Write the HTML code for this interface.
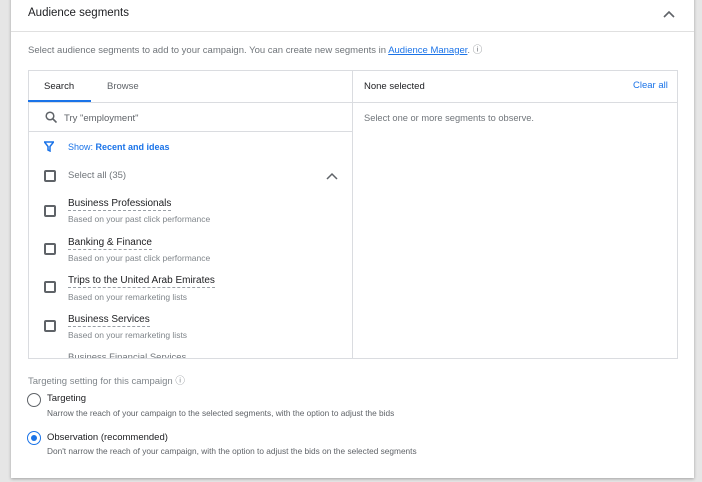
<!DOCTYPE html>
<html><head><style>
*{box-sizing:border-box;margin:0;padding:0}
body{width:702px;height:482px;background:#e6e6e6;font-family:"Liberation Sans",Arial,sans-serif;position:relative;overflow:hidden;color:#3c4043}
.card{position:absolute;left:11px;top:-4px;width:683px;height:482px;background:#fff;box-shadow:0 1px 3px rgba(0,0,0,.3)}
.a{position:absolute;white-space:nowrap}
.cb{position:absolute;width:12px;height:12px;border:2px solid #5f6368;border-radius:2px}
.t{font-size:10px;color:#202124;border-bottom:1px dashed #9aa0a6;line-height:12px}
.s{font-size:8.5px;color:#80868b}
</style></head><body>
<div class="card"></div>
<div class="a" style="left:28px;top:7px;font-size:11.5px;color:#202124">Audience segments</div>
<svg class="a" style="left:663px;top:10px" width="12" height="8"><path d="M1 7L6 2L11 7" stroke="#5f6368" stroke-width="1.6" fill="none"/></svg>
<div class="a" style="left:11px;top:31px;width:683px;height:1px;background:#e0e0e0"></div>
<div class="a" style="left:28px;top:42px;font-size:9.5px;color:#70757a">Select audience segments to add to your campaign. You can create new segments in <span style="color:#1a73e8;text-decoration:underline">Audience Manager</span>. <span>ⓘ</span></div>
<div class="a" style="left:28px;top:70px;width:650px;height:289px;border:1px solid #dadce0"></div>
<div class="a" style="left:352px;top:70px;width:1px;height:289px;background:#dadce0"></div>
<div class="a" style="left:28px;top:102px;width:650px;height:1px;background:#dadce0"></div>
<div class="a" style="left:28px;top:131px;width:324px;height:1px;background:#dadce0"></div>
<div class="a" style="left:28px;top:100px;width:63px;height:2px;background:#1a73e8"></div>
<div class="a" style="left:44px;top:81px;font-size:9.5px;color:#202124">Search</div>
<div class="a" style="left:107px;top:81px;font-size:9.5px;color:#5f6368">Browse</div>
<div class="a" style="left:364px;top:81px;font-size:9.5px;color:#202124">None selected</div>
<div class="a" style="left:633px;top:80px;font-size:9.5px;color:#1a73e8">Clear all</div>
<div class="a" style="left:364px;top:113px;font-size:9.3px;color:#70757a">Select one or more segments to observe.</div>
<svg class="a" style="left:45px;top:111px" width="12" height="12"><circle cx="5" cy="5" r="3.8" stroke="#5f6368" stroke-width="1.5" fill="none"/><path d="M8 8L11.5 11.5" stroke="#5f6368" stroke-width="1.6"/></svg>
<div class="a" style="left:64px;top:113px;font-size:9.5px;color:#5f6368">Try "employment"</div>
<svg class="a" style="left:44px;top:141px" width="10" height="11"><path d="M0.5 1H9.5L6 5.5V10L4 9V5.5Z" stroke="#1a73e8" stroke-width="1.5" fill="none"/></svg>
<div class="a" style="left:68px;top:142px;font-size:9px;color:#1a73e8">Show: <b>Recent and ideas</b></div>
<div class="cb" style="left:44px;top:170px"></div>
<div class="a" style="left:68px;top:170px;font-size:9.5px;color:#70757a">Select all (35)</div>
<svg class="a" style="left:326px;top:172px" width="12" height="8"><path d="M1 7L6 2L11 7" stroke="#5f6368" stroke-width="1.5" fill="none"/></svg>
<div class="cb" style="left:44px;top:205px"></div>
<div class="a t" style="left:68px;top:198px">Business Professionals</div>
<div class="a s" style="left:68px;top:214px">Based on your past click performance</div>
<div class="cb" style="left:44px;top:243px"></div>
<div class="a t" style="left:68px;top:237px">Banking &amp; Finance</div>
<div class="a s" style="left:68px;top:253px">Based on your past click performance</div>
<div class="cb" style="left:44px;top:281px"></div>
<div class="a t" style="left:68px;top:275px">Trips to the United Arab Emirates</div>
<div class="a s" style="left:68px;top:292px">Based on your remarketing lists</div>
<div class="cb" style="left:44px;top:320px"></div>
<div class="a t" style="left:68px;top:314px">Business Services</div>
<div class="a s" style="left:68px;top:330px">Based on your remarketing lists</div>
<div class="a" style="left:68px;top:352px;height:6px;overflow:hidden;font-size:9.5px;color:#70757a"><div>Business Financial Services</div></div>
<div class="a" style="left:28px;top:373px;font-size:9.5px;color:#80868b">Targeting setting for this campaign ⓘ</div>
<div class="a" style="left:27px;top:393px;width:14px;height:14px;border:1.6px solid #5f6368;border-radius:50%"></div>
<div class="a" style="left:47px;top:393px;font-size:9.5px;color:#202124">Targeting</div>
<div class="a" style="left:47px;top:408px;font-size:8.3px;color:#5f6368">Narrow the reach of your campaign to the selected segments, with the option to adjust the bids</div>
<div class="a" style="left:27px;top:431px;width:14px;height:14px;border:1.6px solid #1a73e8;border-radius:50%"></div>
<div class="a" style="left:31px;top:435px;width:6px;height:6px;background:#1a73e8;border-radius:50%"></div>
<div class="a" style="left:47px;top:432px;font-size:9.5px;color:#202124">Observation (recommended)</div>
<div class="a" style="left:47px;top:446px;font-size:8.3px;color:#5f6368">Don't narrow the reach of your campaign, with the option to adjust the bids on the selected segments</div>
</body></html>
